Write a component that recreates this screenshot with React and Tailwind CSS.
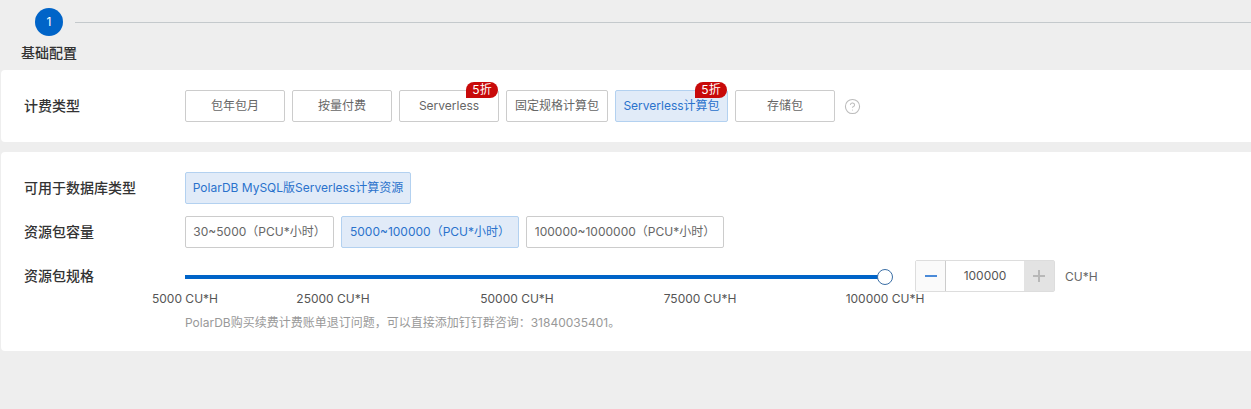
import { CircleHelp } from 'lucide-react'

const font = "[font-family:Inter,'Noto_Sans_CJK_SC',sans-serif]"

function Option({ children, active, badge, className = '' }) {
  return (
    <div className={`relative flex h-8 items-center justify-center rounded-[2px] border text-xs ${active ? 'border-[#b3d1f0] bg-[#e1ebf8] text-[#2a72cc]' : 'border-[#ccc] bg-white text-[#666]'} ${className}`}>
      {children}
      {badge && (
        <span className="absolute right-0 top-[-9px] flex h-[16px] w-[32px] items-center justify-center rounded-[8px_8px_8px_0] bg-[#c80a0a] text-xs leading-none text-white">
          {badge}
        </span>
      )}
    </div>
  )
}

const marks = [
  { label: '5000 CU*H', gap: 'ml-0' },
  { label: '25000 CU*H', gap: 'ml-[148px]' },
  { label: '50000 CU*H', gap: 'ml-[184px]' },
  { label: '75000 CU*H', gap: 'ml-[183px]' },
  { label: '100000 CU*H', gap: 'ml-[185px]' },
]

export default function App() {
  return (
    <div className={`h-[409px] w-[1251px] overflow-hidden bg-[#eeeeee] ${font}`}>
      {/* step header */}
      <div className="h-[70px] pt-2">
        <div className="flex items-center pl-[35px]">
          <div className="flex h-7 w-7 items-center justify-center rounded-full bg-[#0064c8] text-xs text-white">1</div>
          <div className="ml-3 h-px flex-1 bg-[#c4c9cc]" />
        </div>
        <div className="mt-[7px] pl-[21px] text-sm font-medium leading-5 text-[#333]">基础配置</div>
      </div>

      {/* billing type */}
      <div className="ml-px flex h-[72px] items-center rounded-tl-[4px] rounded-bl-[4px] bg-white pl-[23px]">
        <div className="w-[161px] text-sm font-medium text-[#333]">计费类型</div>
        <div className="flex items-center gap-[7px]">
          <Option className="w-[100px]">包年包月</Option>
          <Option className="w-[100px]">按量付费</Option>
          <Option className="w-[100px]" badge="5折">Serverless</Option>
          <Option className="w-[102px]">固定规格计算包</Option>
          <Option className="w-[113px]" active badge="5折">Serverless计算包</Option>
          <Option className="w-[100px]">存储包</Option>
          <CircleHelp className="ml-[2px] h-[17px] w-[17px] text-[#bbb]" strokeWidth={1.5} />
        </div>
      </div>

      {/* package */}
      <div className="ml-px mt-[10px] h-[199px] rounded-tl-[4px] rounded-bl-[4px] bg-white pl-[23px] pt-5">
        <div className="flex items-center">
          <div className="w-[161px] text-sm font-medium text-[#333]">可用于数据库类型</div>
          <Option className="w-[226px]" active>PolarDB MySQL版Serverless计算资源</Option>
        </div>
        <div className="mt-3 flex items-center">
          <div className="w-[161px] text-sm font-medium text-[#333]">资源包容量</div>
          <div className="flex gap-[7px]">
            <Option className="w-[149px]">30~5000（PCU*小时）</Option>
            <Option className="w-[178px]" active>5000~100000（PCU*小时）</Option>
            <Option className="w-[198px]">100000~1000000（PCU*小时）</Option>
          </div>
        </div>
        <div className="mt-3 flex items-start">
          <div className="w-[161px] pt-[6px] text-sm font-medium leading-5 text-[#333]">资源包规格</div>
          <div>
            <div className="flex items-start">
              <div className="w-[700px] pt-[15px]">
                <div className="relative h-1 bg-[#0064c8]">
                  <div className="absolute right-[-8px] top-[-6px] h-4 w-4 rounded-full border border-[#3a6ea5] bg-white" />
                </div>
                <div className="mt-1 flex h-[3px] items-start">
                  {marks.map(m => (
                    <div key={m.label} className={`relative h-[3px] w-px bg-[#0064c8] ${m.gap}`}>
                      <span className="absolute left-1/2 top-2 -translate-x-1/2 whitespace-nowrap text-xs leading-4 text-[#555]">{m.label}</span>
                    </div>
                  ))}
                </div>
              </div>
              <div className="ml-[30px] flex h-8 w-[140px] rounded-[2px] border border-[#ddd] text-xs">
                <div className="flex w-[30px] items-center justify-center border-r border-[#ccc] bg-[#fafafa] text-[#2a72cc]">
                  <div className="h-[2px] w-3 bg-[#4a8ad8]" />
                </div>
                <div className="flex flex-1 items-center justify-center text-[#555]">100000</div>
                <div className="relative flex w-[30px] items-center justify-center bg-[#e3e3e3]">
                  <div className="h-[2px] w-3 bg-[#b8b8b8]" />
                  <div className="absolute h-3 w-[2px] bg-[#b8b8b8]" />
                </div>
              </div>
              <div className="ml-[10px] flex h-8 items-center pt-[1px] text-xs text-[#666]">CU*H</div>
            </div>
            <div className="mt-[23px] text-xs leading-4 text-[#999]">PolarDB购买续费计费账单退订问题，可以直接添加钉钉群咨询：31840035401。</div>
          </div>
        </div>
      </div>
    </div>
  )
}
